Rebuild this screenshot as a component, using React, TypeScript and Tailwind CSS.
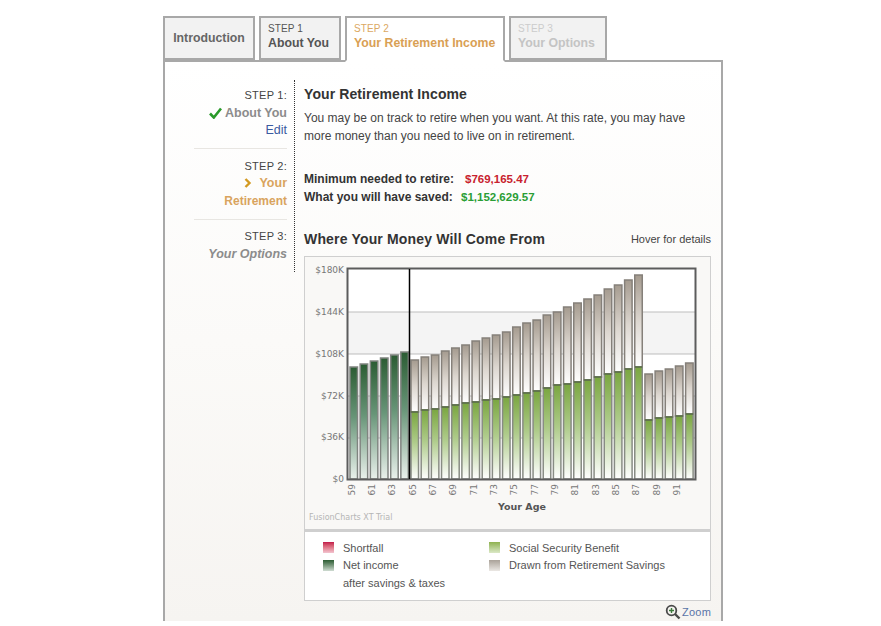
import React from 'react';

const SLOT = 10.17;
const barX = (i: number) => 350 + SLOT * i;
const BASE = 479;

// Tops of the bars, read from the chart (pixel rows)
const netTops = [367, 364, 361, 358, 355, 352];
const drawnTops = [360, 357, 355, 351, 348, 345, 341, 338, 335, 332, 327, 323, 320, 315, 312, 307, 303, 299, 295, 289, 285, 280, 275, 374, 371, 369, 366, 363];
const ssTops = [412, 410, 409, 407, 405, 403, 402, 400, 399, 397, 395, 393, 391, 388, 385, 384, 382, 380, 377, 374, 372, 369, 367, 363, 420, 418, 417, 416, 414].filter((_, i) => i !== 23);

const yLabels = [
    { label: '$180K', y: 270 },
    { label: '$144K', y: 312 },
    { label: '$108K', y: 354 },
    { label: '$72K', y: 396 },
    { label: '$36K', y: 437 },
    { label: '$0', y: 479 },
];

const xLabels = Array.from({ length: 17 }, (_, i) => 59 + i * 2);

const Chart: React.FC = () => (
    <svg width="405" height="272" viewBox="305 257 405 272" className="block">
        <defs>
            <linearGradient id="net" x1="0" y1="0" x2="0" y2="1">
                <stop offset="0" stopColor="#2b5c33" />
                <stop offset="0.45" stopColor="#689578" />
                <stop offset="1" stopColor="#eaf1ec" />
            </linearGradient>
            <linearGradient id="ss" x1="0" y1="0" x2="0" y2="1">
                <stop offset="0" stopColor="#7aa640" />
                <stop offset="0.45" stopColor="#aecb8a" />
                <stop offset="1" stopColor="#ffffff" />
            </linearGradient>
            <linearGradient id="drawn" x1="0" y1="0" x2="0" y2="1">
                <stop offset="0" stopColor="#a59b8f" />
                <stop offset="0.5" stopColor="#dcd6cf" />
                <stop offset="1" stopColor="#ffffff" />
            </linearGradient>
        </defs>

        <rect x="348" y="269" width="347" height="210" fill="#ffffff" />
        <rect x="348" y="312" width="347" height="42" fill="#f4f4f4" />
        <rect x="348" y="396" width="347" height="42" fill="#f4f4f4" />
        {[312, 354, 396, 438].map(y => (
            <line key={y} x1="348" x2="695" y1={y} y2={y} stroke="#bdbdbd" strokeWidth="1" />
        ))}

        {netTops.map((top, i) => (
            <rect key={i} x={barX(i)} y={top} width="7.5" height={BASE - top} fill="url(#net)" stroke="#808480" strokeWidth="1.5" />
        ))}
        {drawnTops.map((top, i) => (
            <g key={i}>
                <rect x={barX(i + 6)} y={top} width="7.5" height={ssTops[i] - top} fill="url(#drawn)" stroke="#85807a" strokeWidth="1.5" />
                <rect x={barX(i + 6)} y={ssTops[i]} width="7.5" height={BASE - ssTops[i]} fill="url(#ss)" stroke="#888c84" strokeWidth="1.5" />
                <line x1={barX(i + 6)} x2={barX(i + 6) + 7.5} y1={ssTops[i]} y2={ssTops[i]} stroke="#3f5a22" strokeWidth="1" />
            </g>
        ))}

        <rect x="347.5" y="268.5" width="348" height="211" fill="none" stroke="#5c5c5c" strokeWidth="2" />
        <line x1="409.5" x2="409.5" y1="269" y2="479" stroke="#000000" strokeWidth="1.5" />

        {yLabels.map(l => (
            <text key={l.label} x="344" y={l.y + 3} textAnchor="end" fontSize="9" fill="#777777" fontFamily="'DejaVu Sans', sans-serif">{l.label}</text>
        ))}
        {xLabels.map((age, i) => {
            const x = 354.5 + 2 * SLOT * i;
            return (
                <text key={age} transform={`translate(${x} 484) rotate(-90)`} textAnchor="end" fontSize="9" fill="#777777" fontFamily="'DejaVu Sans', sans-serif">{age}</text>
            );
        })}
        <text x="522" y="510" textAnchor="middle" fontSize="9.5" fontWeight="bold" fill="#555555" fontFamily="'DejaVu Sans', sans-serif">Your Age</text>
        <text x="309" y="520" fontSize="8" fill="#b5b5b5" fontFamily="'DejaVu Sans', sans-serif">FusionCharts XT Trial</text>
    </svg>
);

const Tab: React.FC<{ step: string; title: string; width: string; tone: 'done' | 'active' | 'off' }> = ({ step, title, width, tone }) => {
    const box = tone === 'active' ? 'bg-white border-b-white relative z-10 h-[46px]' : 'bg-[#f2f2f2] h-[44px]';
    const stepColor = tone === 'active' ? 'text-[#dba862]' : tone === 'off' ? 'text-[#cccccc]' : 'text-[#555555]';
    const titleColor = tone === 'active' ? 'text-[#d9a054]' : tone === 'off' ? 'text-[#c4c4c4]' : 'text-[#555555]';
    return (
        <div className={`${width} ${box} border-2 border-[#a8a8a8] pl-[7px] pt-[4px] whitespace-nowrap`}>
            <div className={`text-[10px] leading-[14px] tracking-[0.1px] ${stepColor}`}>{step}</div>
            <div className={`text-[12.3px] leading-[14px] font-bold ${titleColor}`}>{title}</div>
        </div>
    );
};

const LegendItem: React.FC<{ swatch: string; children: React.ReactNode }> = ({ swatch, children }) => (
    <div className="flex items-center h-[17.5px]">
        <span className={`w-[11px] h-[11px] mr-[9px] bg-gradient-to-b ${swatch}`}></span>
        <span>{children}</span>
    </div>
);

const App: React.FC = () => {
    return (
        <div className="h-[626px] overflow-hidden bg-white pl-[163px] pt-[15px] font-['Liberation_Sans',Arial,sans-serif] text-[#333333]">
            <div className="flex gap-1 items-start h-[45px] pt-px">
                <div className="w-[92px] h-[44px] bg-[#f2f2f2] border-2 border-[#a8a8a8] flex items-center justify-center text-[12.3px] font-bold text-[#666666]">
                    Introduction
                </div>
                <Tab step="STEP 1" title="About You" width="w-[82px]" tone="done" />
                <Tab step="STEP 2" title="Your Retirement Income" width="w-[160px]" tone="active" />
                <Tab step="STEP 3" title="Your Options" width="w-[98px]" tone="off" />
            </div>

            <div className="w-[560px] h-[561px] border-x-2 border-t-2 border-[#a8a8a8] flex bg-gradient-to-b from-white via-[#fbfaf8] to-[#f6f4f1]">
                <div className="w-[130px] h-[192px] mt-[18px] border-r border-dotted border-[#333333] pr-[7px] text-right shrink-0">
                    <div className="pt-[7px] text-[11px] leading-[17.5px] tracking-[0.25px] text-[#444444]">STEP 1:</div>
                    <div className="text-[12.5px] leading-[17.5px] font-bold text-[#8c8c8c] flex justify-end items-center gap-[3px]">
                        <svg width="13" height="12" viewBox="0 0 13 12"><path d="M1 6.5 L4.8 10.5 L12 1.5" fill="none" stroke="#2a9a2a" strokeWidth="2.6" /></svg>
                        About You
                    </div>
                    <div className="text-[12.5px] leading-[17.5px] text-[#3a5aa0]">Edit</div>
                    <div className="ml-[29px] border-t border-[#e8e6e2] mt-[8px] mb-[9px]"></div>
                    <div className="text-[11px] leading-[17.5px] tracking-[0.25px] text-[#444444]">STEP 2:</div>
                    <div className="text-[12.5px] leading-[17.5px] font-bold text-[#d9a45e]">
                        <svg width="8" height="10" viewBox="0 0 8 10" className="inline mr-[7px] mb-[2px]"><path d="M1.5 1 L5.5 5 L1.5 9" fill="none" stroke="#d39a22" strokeWidth="2.4" /></svg>
                        Your
                    </div>
                    <div className="text-[12px] leading-[17.5px] font-bold text-[#d9a45e]">Retirement</div>
                    <div className="ml-[29px] border-t border-[#e8e6e2] mt-[9px] mb-[8px]"></div>
                    <div className="text-[11px] leading-[17.5px] tracking-[0.25px] text-[#444444]">STEP 3:</div>
                    <div className="text-[12.5px] leading-[17.5px] font-bold italic text-[#8c8c8c]">Your Options</div>
                </div>

                <div className="ml-[9px] w-[407px] shrink-0">
                    <h1 className="mt-[23px] text-[14px] leading-[18px] font-bold tracking-[0.1px] text-[#333333]">Your Retirement Income</h1>
                    <p className="mt-[7px] text-[12px] leading-[17.5px] text-[#444444]">
                        You may be on track to retire when you want. At this rate, you may have<br />
                        more money than you need to live on in retirement.
                    </p>
                    <div className="mt-[25px] text-[12px] leading-[18px] font-bold text-[#333333]">
                        <div className="flex">
                            <span className="w-[161px]">Minimum needed to retire:</span>
                            <span className="text-[11.5px] text-[#c8222e]">$769,165.47</span>
                        </div>
                        <div className="flex">
                            <span className="w-[157px]">What you will have saved:</span>
                            <span className="text-[11.5px] text-[#2a9e35]">$1,152,629.57</span>
                        </div>
                    </div>
                    <div className="mt-[24px] flex items-center justify-between h-[18px]">
                        <h2 className="text-[14px] font-bold tracking-[0.17px] text-[#333333]">Where Your Money Will Come From</h2>
                        <span className="text-[11px] text-[#444444]">Hover for details</span>
                    </div>
                    <div className="mt-[8px] border border-[#cfcfcf] bg-[#f9f8f6] h-[274px]">
                        <Chart />
                    </div>
                    <div className="h-[71px] border border-t-2 border-[#cfcfcf] bg-white pl-[18px] pt-[7px] grid grid-cols-[166px_1fr] text-[11px] text-[#555555] content-start">
                        <LegendItem swatch="from-[#c2134a] to-[#f2c4d0]">Shortfall</LegendItem>
                        <LegendItem swatch="from-[#8fb24f] to-[#dbe8c6]">Social Security Benefit</LegendItem>
                        <LegendItem swatch="from-[#2b5c33] to-[#cfdcd2]">Net income</LegendItem>
                        <LegendItem swatch="from-[#aaa299] to-[#ebe8e4]">Drawn from Retirement Savings</LegendItem>
                        <div className="pl-[20px] pt-px leading-[17.5px] col-span-2">after savings &amp; taxes</div>
                    </div>
                    <div className="mt-[3px] flex justify-end items-center text-[11px] tracking-[0.2px] text-[#5a74a8]">
                        <svg width="16" height="16" viewBox="0 0 16 16" className="mr-[1px]">
                            <circle cx="6.5" cy="6.5" r="4.8" fill="#f5f3f0" stroke="#4a4a4a" strokeWidth="1.8" />
                            <path d="M10 10 L14.5 14.5" stroke="#4a4a4a" strokeWidth="2.4" />
                            <path d="M4 6.5 H9 M6.5 4 V9" stroke="#3c7a3c" strokeWidth="1.4" />
                        </svg>
                        Zoom
                    </div>
                </div>
            </div>
        </div>
    );
};

export default App;
